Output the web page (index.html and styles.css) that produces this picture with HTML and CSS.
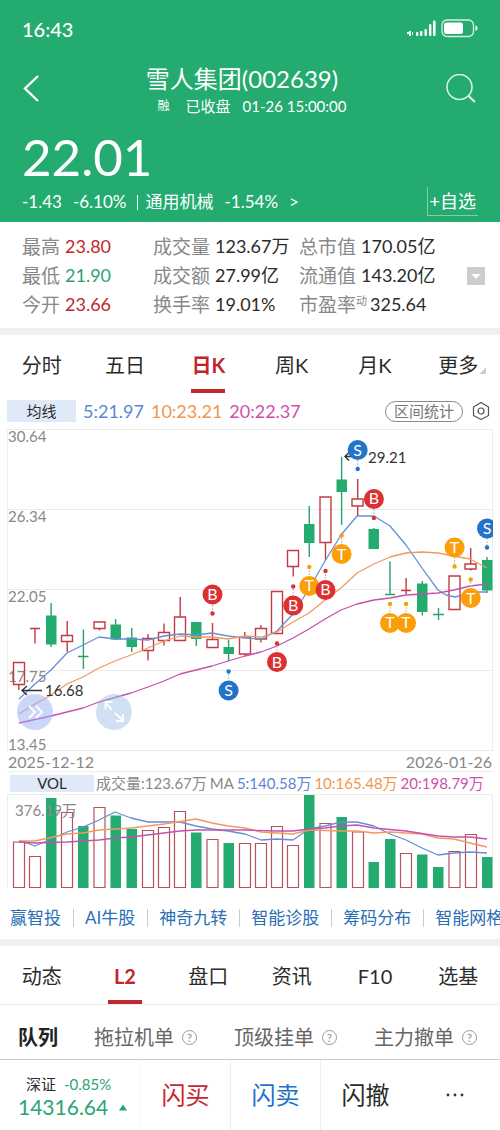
FILE: index.html
```html
<!DOCTYPE html>
<html lang="zh-CN">
<head>
<meta charset="utf-8">
<meta name="viewport" content="width=device-width, initial-scale=1">
<title>雪人集团(002639)</title>
<link rel="stylesheet" href="styles.css">
</head>
<body>
<header class="hero">
  <div class="status">
    <span class="status-time">16:43</span>
    <svg class="status-icons" viewBox="0 0 72 20" width="72" height="20" aria-hidden="true">
      <g fill="#fff">
        <rect x="1" y="13" width="2" height="2"/><rect x="3" y="12" width="2" height="5"/><rect x="6" y="13" width="1" height="3"/>
        <rect x="10" y="13" width="2.4" height="4" rx="1"/><rect x="14" y="12" width="2.4" height="5" rx="1"/>
        <rect x="18.500" y="10" width="2.400" height="7" rx="1"/><rect x="23" y="5" width="2.400" height="12" rx="1"/>
        <rect x="27" y="1.500" width="2.600" height="15.500" rx="1"/>
        <rect x="38" y="3.500" width="19" height="11.500" rx="2.500"/>
        <path d="M69.500 6.500q2 0 2 2.700t-2 2.700z"/>
      </g>
      <rect x="36" y="1" width="31.500" height="16.500" rx="5" fill="none" stroke="#d6f2e3" stroke-width="1.300"/>
    </svg>
  </div>
  <div class="titlebar">
    <button class="icon-btn" aria-label="返回"><svg viewBox="0 0 20 30" width="20" height="30"><path d="M16 2 3 14.500 16 27" fill="none" stroke="#fff" stroke-width="2.400"/></svg></button>
    <div class="title-block">
      <h1 class="title">雪人集团(002639)</h1>
      <p class="subtitle"><span class="rong">融</span><span>已收盘</span><span>01-26 15:00:00</span></p>
    </div>
    <button class="icon-btn icon-right" aria-label="搜索"><svg viewBox="0 0 30 30" width="30" height="30"><g fill="none" stroke="#dff7ea" stroke-width="1.500"><circle cx="13.500" cy="13" r="12.500"/><path d="m22.500 22 6.500 6" stroke-width="2"/></g></svg></button>
  </div>
  <p class="price">22.01</p>
  <div class="change-row">
    <a class="change" href="#sector"><span>-1.43</span><span>-6.10%</span><span class="sector">通用机械</span><span>-1.54%</span><span>&gt;</span></a>
    <button class="add-btn">+自选</button>
  </div>
</header>

<section class="stats">
  <dl class="stat-col">
    <div class="stat"><dt>最高</dt><dd class="up">23.80</dd></div>
    <div class="stat"><dt>最低</dt><dd class="down">21.90</dd></div>
    <div class="stat"><dt>今开</dt><dd class="up">23.66</dd></div>
  </dl>
  <dl class="stat-col">
    <div class="stat"><dt>成交量</dt><dd>123.67万</dd></div>
    <div class="stat"><dt>成交额</dt><dd>27.99亿</dd></div>
    <div class="stat"><dt>换手率</dt><dd>19.01%</dd></div>
  </dl>
  <dl class="stat-col">
    <div class="stat"><dt>总市值</dt><dd>170.05亿</dd></div>
    <div class="stat"><dt>流通值</dt><dd>143.20亿</dd></div>
    <div class="stat stat-tight"><dt>市盈率<sup class="dyn">动</sup></dt><dd>325.64</dd></div>
  </dl>
  <button class="expand" aria-label="展开"><svg viewBox="0 0 18 18" width="18" height="18"><path d="M4.500 7h9L9 12z" fill="#fff"/></svg></button>
</section>

<nav class="tabs band">
  <button class="tab">分时</button>
  <button class="tab">五日</button>
  <button class="tab tab-on">日K</button>
  <button class="tab">周K</button>
  <button class="tab">月K</button>
  <button class="tab tab-more">更多</button>
</nav>

<section class="tools">
  <button class="chip">均线</button>
  <span class="c5">5:21.97</span><span class="c10">10:23.21</span><span class="c20">20:22.37</span>
  <button class="range-btn">区间统计</button>
  <button class="icon-btn" aria-label="设置"><svg viewBox="0 0 18 20" width="18" height="20"><g fill="none" stroke="#555" stroke-width="1.200"><path d="M9 1.500 16.500 6v8.500L9 18.500 1.500 14.500V6z" stroke-linejoin="round"/><circle cx="9" cy="10" r="3"/></g></svg></button>
</section>

<section class="kchart">
  <svg class="plot" viewBox="0 428 500 324" role="img" aria-label="日K线">
    <path class="grid" d="M7.500 429.500H492.500V750.500H7.500zM7.500 509.500H492.500M7.500 589.500H492.500M7.500 670.500H492.500"/>
    <g class="axis"><text x="8" y="442">30.64</text><text x="8" y="522">26.34</text><text x="8" y="602">22.05</text><text x="8" y="682">17.75</text><text x="8" y="750">13.45</text></g>
    <path class="red" d="M18.800 684.500V690M35 628.500V643.500M30 628.500H40M67.200 621V635M67.200 641.500V652M99.500 628.500V630.500M148 634V638.500M148 650.500V660.500M164 623.500V632.500M164 640.500V645.500M180.200 597V617M212.500 623V639M244.800 632V637M244.800 654V655.500M260.900 625V628.500M260.900 639V642.500M293.200 566.500V576.500M325.500 542.500V560M357.700 479V499M357.700 506V516M406.100 578V594M401 590.500H411M470.700 548V564M470.700 569V570.500"/>
    <path class="red" d="M13.500 662.500h11v22h-11zM61.500 635.500h11v6h-11zM94 622h11v6.500h-11zM142.500 638.500h11v12h-11zM158.500 632.500h11v8h-11zM174.500 617h11v23.500h-11zM207 639.500h11v8h-11zM239.500 637h11v17h-11zM255.500 628.500h11v10.500h-11zM271.500 591.500h11v42h-11zM287.500 550.500h11v16h-11zM320 497h11v45.500h-11zM352 499h11v7h-11zM449 576h11v33.500h-11zM465 564h11v5h-11z"/>
    <path class="green" d="M51.100 603V647M83.400 629.500V669M78 656.500H88.500M115.600 619V640M131.800 628V652M196.300 622V646M228.600 640V661M309.300 506V557M341.600 457V525M373.900 528V549M390 561.500V594M385 594.500H395M422.300 581V615.500M438.500 608V620M433 614.500H444M487 557V593"/>
    <path class="green-fill" d="M46 615.500h10.500v29H46zM110.500 624.500H121V639.500h-10.500zM126.500 637.500H137v9.500h-10.500zM191 622h10.500v17H191zM223.500 647H234v7h-10.500zM304 524h10.500v19H304zM336.500 479.500H347v12.500h-10.500zM368.500 529H379v20h-10.500zM417 583.500h10.500V612H417zM482 560h10.500v30.500H482z"/>
    <polyline class="ma ma5" points="19,699 35,684 51,670 67,653 83,645 99,637 115,639 131,639 148,640 164,636 180,634 196,635 212,633 228,636 245,638 261,639 277,631 293,614 309,589 325,561 341,535 357,516 374,516 390,526 406,545 422,568 438,590 446,595 455,597 463,595 471,592 487,592"/>
    <polyline class="ma ma10" points="19,714 35,704 51,695 67,684 83,677 99,668 115,661 131,655 148,648 164,641 180,636 196,637 212,637 228,639 245,636 261,637 277,632 293,622 309,613 325,600 341,588 357,573 374,564 390,557 406,553 422,552 438,553 454,556 470,559 487,568"/>
    <polyline class="ma ma20" points="19,723 51,716 83,708 99,702 131,693 148,687 164,681 180,674 212,666 228,661 245,656 261,652 277,646 293,638 309,629 325,619 341,610 357,604 374,600 390,598 406,595 422,594 438,593 454,590 470,586 487,584"/>
    <g class="note"><path d="M42 690.500H22M27 686 22 690.500 27 695M354 456.500H345M349 452.500 345 456.500 349 460.500"/><text x="45" y="696">16.68</text><text x="368" y="463">29.21</text></g>
    <path class="stem" d="M212.500 605V613M228.600 671V680M277 643V652M293.200 586V596M309.300 567V576M325.500 571V580M341.600 535V544M357.700 460V469M373.900 509V518M390 604V613M406.100 604V613M454.600 557V566M470.700 579V588M487 538V547"/>
    <g class="mark mark-s"><circle cx="228.600" cy="671.500" r="2.200"/><circle cx="228.600" cy="690.500" r="10"/><text x="228.600" y="696">S</text><circle cx="357.700" cy="469" r="2.200"/><circle cx="357.700" cy="450" r="10"/><text x="357.700" y="456">S</text></g>
    <g class="mark mark-t"><circle cx="309.300" cy="567" r="2.200"/><circle cx="309.300" cy="586" r="10"/><text x="309.300" y="591">T</text><circle cx="341.600" cy="535.500" r="2.200"/><circle cx="341.600" cy="554" r="10"/><text x="341.600" y="560">T</text><circle cx="390" cy="604" r="2.200"/><circle cx="390" cy="623" r="10"/><text x="390" y="628">T</text><circle cx="406.100" cy="604" r="2.200"/><circle cx="406.100" cy="623" r="10"/><text x="406.100" y="628">T</text><circle cx="454.600" cy="566.500" r="2.200"/><circle cx="454.600" cy="547.500" r="10"/><text x="454.600" y="553">T</text><circle cx="470.700" cy="579.500" r="2.200"/><circle cx="470.700" cy="598" r="10"/><text x="470.700" y="604">T</text></g>
    <g class="mark mark-b"><circle cx="212.500" cy="613.500" r="2.200"/><circle cx="212.500" cy="594.500" r="10"/><text x="212.500" y="600">B</text><circle cx="277" cy="643.500" r="2.200"/><circle cx="277" cy="662" r="10"/><text x="277" y="668">B</text><circle cx="293.200" cy="586.500" r="2.200"/><circle cx="293.200" cy="605.500" r="10"/><text x="293.200" y="611">B</text><circle cx="325.500" cy="571" r="2.200"/><circle cx="325.500" cy="590" r="10"/><text x="325.500" y="595">B</text><circle cx="373.900" cy="518" r="2.200"/><circle cx="373.900" cy="499" r="10"/><text x="373.900" y="504">B</text></g>
    <svg x="470" y="510" width="23" height="45" viewBox="470 510 23 45"><g class="mark mark-s"><circle cx="487" cy="547.500" r="2.200"/><circle cx="487" cy="528.500" r="10"/><text x="487" y="534">S</text></g></svg>
  </svg>
  <button class="float float-fast" aria-label="快进"><svg viewBox="0 0 36 36" width="36" height="36"><path d="m12 12 6 6-6 6M19 12l6 6-6 6" fill="none" stroke="#fff" stroke-width="1.800"/></svg></button>
  <button class="float float-full" aria-label="全屏"><svg viewBox="0 0 36 36" width="36" height="36"><path d="M16 16 10 9M9.500 15V8h7M19 19l8 7.500M20 27h7v-7" fill="none" stroke="#fff" stroke-width="1.800"/></svg></button>
  <div class="dates"><time>2025-12-12</time><time>2026-01-26</time></div>
</section>

<section class="vol">
  <div class="vol-head"><button class="chip vol-chip">VOL</button><span class="vol-text"><span>成交量:123.67万</span><span>MA</span><span class="c5">5:140.58万</span><span class="c10">10:165.48万</span><span class="c20">20:198.79万</span></span></div>
  <svg class="plot" viewBox="0 794 500 96" role="img" aria-label="成交量">
    <path class="grid" d="M7.500 888V794.500H492.500V888"/>
    <path class="bar-red" d="M13.500 887.500V842H24.500V887.500zM29.500 887.500V856.500H40.500V887.500zM61.500 887.500V812.500H72.500V887.500zM94 887.500V807.500H105V887.500zM142.500 887.500V830.500H153.500V887.500zM158.500 887.500V827.500H169.500V887.500zM174.500 887.500V811.500H185.500V887.500zM207 887.500V839.500H218V887.500zM239.500 887.500V843.500H250.500V887.500zM255.500 887.500V843.500H266.500V887.500zM271.500 887.500V826.500H282.500V887.500zM287.500 887.500V845.500H298.500V887.500zM320 887.500V823.500H331V887.500zM352.500 887.500V832H363.500V887.500zM400.500 887.500V853.500H411.500V887.500zM449 887.500V851.500H460V887.500zM465.500 887.500V834.500H476.500V887.500z"/>
    <path class="green-fill" d="M46 888V798H56.500V888zM78 888V826H88.500V888zM110.500 888V815.500H121V888zM126.500 888V829H137V888zM191 888V832.500H201.500V888zM223.500 888V843H234V888zM304 888V795H314.500V888zM336.500 888V817H347V888zM368.500 888V862H379V888zM385 888V839H395.500V888zM417 888V854.500H427.500V888zM433 888V867H443.500V888zM482 888V857H492.500V888z"/>
    <polyline class="ma ma5" points="19,841 27,843 35,846 51,839 67,832 83,827 99,820 115,812 131,818 148,822 180,822 196,826 212,829 228,831 245,834 261,840 277,839 293,840 309,829 325,826 341,822 357,822 374,826 390,834 406,840 422,848 438,855 454,853 470,852 487,853"/>
    <polyline class="ma ma10" points="19,841 35,841 67,834 83,833 99,830 131,828 164,824 196,819 212,823 228,826 245,828 261,832 277,833 293,834 309,830 341,831 357,831 374,833 390,832 406,833 422,834 438,838 454,839 470,843 487,847"/>
    <polyline class="ma ma20" points="19,842 35,843 67,842 99,840 115,838 131,837 164,833 180,831 196,830 245,830 277,831 293,831 309,829 325,828 341,826 357,825 374,828 406,831 438,836 454,837 470,837 487,839"/>
    <text class="axis" x="15" y="816">376.19万</text>
  </svg>
</section>

<nav class="links">
  <a href="#a">赢智投</a><a href="#b">AI牛股</a><a href="#c">神奇九转</a><a href="#d">智能诊股</a><a href="#e">筹码分布</a><a href="#f">智能网格</a>
</nav>

<nav class="tabs band tabs-line">
  <button class="tab">动态</button>
  <button class="tab tab-on">L2</button>
  <button class="tab">盘口</button>
  <button class="tab">资讯</button>
  <button class="tab">F10</button>
  <button class="tab">选基</button>
</nav>

<nav class="queue">
  <button class="q q-on">队列</button>
  <button class="q">拖拉机单<span class="help">?</span></button>
  <button class="q">顶级挂单<span class="help">?</span></button>
  <button class="q">主力撤单<span class="help">?</span></button>
</nav>

<footer class="trade">
  <a class="index" href="#index">
    <span class="index-top"><span>深证</span><span class="down">-0.85%</span></span>
    <span class="index-val down">14316.64<svg viewBox="0 0 10 7" width="10" height="7"><path d="M5 0.500 9 6.500H1z" fill="#1fa866"/></svg></span>
  </a>
  <button class="act buy">闪买</button>
  <button class="act sell">闪卖</button>
  <button class="act cancel">闪撤</button>
  <button class="act more" aria-label="更多操作"><svg viewBox="0 0 18 4" width="18" height="4"><g fill="#333"><circle cx="2" cy="2" r="1.400"/><circle cx="9" cy="2" r="1.400"/><circle cx="16" cy="2" r="1.400"/></g></svg></button>
</footer>
</body>
</html>
```
FILE: styles.css
```css
* { box-sizing: border-box; }
body, h1, p, dl, dd { margin: 0; }
body {
  background: #fff;
  color: #2b2b2b;
  font-family: Lato, "Noto Sans CJK SC", sans-serif;
  font-size: 18px;
  line-height: 24px;
  overflow-x: hidden;
}
button {
  padding: 0;
  border: 0;
  background: none;
  color: inherit;
  font: inherit;
  white-space: nowrap;
}
a { color: inherit; text-decoration: none; }
svg { display: block; }

.up { color: #c0272d; }
.down { color: #2ba471; }
.c5 { color: #5b86d6; }
.c10 { color: #f0964f; }
.c20 { color: #cf4fae; }

/* Header */
.hero {
  background: #24ab6f;
  color: #fff;
  padding: 14px 22px 6px;
}
.status {
  display: flex;
  justify-content: space-between;
  align-items: center;
  height: 30px;
}
.status-time { font-size: 20px; font-weight: 500; }
.titlebar {
  display: grid;
  grid-template-columns: 48px 1fr 48px;
  align-items: start;
  margin-top: 20px;
}
.icon-btn { display: flex; align-items: center; }
.titlebar .icon-btn { padding-top: 10px; }
.icon-right { justify-content: flex-end; padding-right: 2px; }
.title-block { text-align: center; }
.title {
  font-size: 24px;
  font-weight: 400;
  line-height: 30px;
  padding-right: 16px;
}
.subtitle {
  display: flex;
  justify-content: center;
  gap: 12px;
  padding-left: 4px;
  font-size: 15px;
  line-height: 24px;
}
.rong { font-size: 12px; padding-right: 4px; }
.price { font-size: 51px; line-height: 60px; margin-top: 9px; }
.change-row {
  display: flex;
  justify-content: space-between;
  align-items: center;
}
.change { display: flex; gap: 11px; font-size: 17px; }
.sector {
  position: relative;
  padding-left: 8px;
}
.sector::before {
  content: "";
  position: absolute;
  left: 0;
  top: 5px;
  height: 15px;
  border-left: 1px solid #fff;
}
.add-btn {
  padding: 0 2px;
  border: solid #7dd0a8;
  border-width: 0 0 1px 1px;
  font-size: 18px;
  line-height: 28px;
}

/* Key figures */
.stats {
  display: grid;
  grid-template-columns: 131fr 146fr 168fr 18px;
  align-items: center;
  padding: 10px 15px 9px 22px;
}
.stat {
  display: flex;
  gap: 5px;
  line-height: 29px;
  white-space: nowrap;
}
.stat dt { color: #888; font-size: 19px; }
.stat dd { font-size: 18px; }
.stat-tight { gap: 3px; }
.dyn { font-size: 11px; line-height: 1; }
.expand { background: #ccc; }

/* Tab strips */
.tabs { display: grid; grid-template-columns: repeat(6, 1fr); }
.band { border-top: 7px solid #f0f0f0; }
.tab {
  position: relative;
  height: 58px;
  font-size: 20px;
  line-height: 60px;
}
.tab-on { color: #c0272d; font-weight: 700; }
.tab-on::after {
  content: "";
  position: absolute;
  left: 50%;
  bottom: 0;
  width: 34px;
  height: 4px;
  margin-left: -17px;
  background: #bf2930;
}
.tab-more::after {
  content: "";
  position: absolute;
  right: 14px;
  bottom: 19px;
  width: 7px;
  height: 7px;
  background: linear-gradient(135deg, transparent 50%, #ccc 50%);
}
.tabs-line { border-bottom: 1px solid #eee; }

/* Moving averages */
.tools {
  display: flex;
  align-items: center;
  gap: 7px;
  height: 22px;
  margin: 7px 10px 6px 7px;
}
.tools .icon-btn { margin-left: 2px; }
.chip {
  width: 69px;
  height: 22px;
  background: #dfe9f8;
  font-size: 15px;
  line-height: 22px;
}
.range-btn {
  margin-left: auto;
  padding: 0 8px;
  border: 1px solid #888;
  border-radius: 11px;
  color: #777;
  font-size: 15px;
  line-height: 19px;
}

/* Charts */
.kchart { position: relative; }
.plot { width: 100%; height: auto; }
.grid { fill: none; stroke: #ececec; }
.axis { fill: #888; font-size: 15px; }
.red { fill: none; stroke: #c43a44; stroke-width: 1.4; }
.bar-red { fill: #fff; stroke: #b5525a; stroke-width: 1.2; }
.green { fill: none; stroke: #24a469; stroke-width: 1.4; }
.green-fill { fill: #24ab6f; }
.ma { fill: none; stroke-width: 1.3; stroke-linejoin: round; }
.ma5 { stroke: #6690d4; }
.ma10 { stroke: #ef9a62; }
.ma20 { stroke: #c850ac; }
.note path { fill: none; stroke: #333; stroke-width: 1.4; }
.note text { fill: #333; font-size: 15px; }
.stem { stroke: #bbb; stroke-dasharray: 2 1; }
.mark text { fill: #fff; font-size: 16px; text-anchor: middle; }
.mark-s { fill: #2373cb; }
.mark-t { fill: #fb9e07; }
.mark-b { fill: #dc3032; }
.float {
  position: absolute;
  top: 266px;
  border-radius: 50%;
}
.float-fast { left: 3.3%; background: rgba(150, 175, 245, 0.5); }
.float-full { left: 19.1%; background: rgba(160, 195, 232, 0.5); }
.dates {
  display: flex;
  justify-content: space-between;
  padding: 0 8px;
  color: #888;
  font-size: 16px;
  line-height: 19px;
}
.vol-head {
  display: flex;
  align-items: center;
  gap: 2px;
  height: 23px;
  margin: 0 7px;
  padding-left: 3px;
  border-top: 1px solid #eee;
  white-space: nowrap;
}
.vol-chip { flex: none; width: 84px; height: 17px; line-height: 17px; }
.vol-text { display: flex; gap: 3px; color: #888; font-size: 15px; }

/* Shortcuts */
.links {
  display: flex;
  height: 49px;
  padding: 6px 0 0 10px;
  align-items: center;
  overflow: hidden;
  color: #2b6fb5;
  font-size: 17px;
  line-height: 18px;
  white-space: nowrap;
}
.links a + a {
  margin-left: 12px;
  padding-left: 11px;
  border-left: 1px solid #ccc;
}

/* Order queue */
.queue {
  display: grid;
  grid-template-columns: 76fr 140fr 140fr 126fr;
  height: 55px;
  padding: 10px 0 0 18px;
  border-bottom: 1px solid #ccc;
}
.q {
  display: flex;
  align-items: center;
  gap: 8px;
  color: #666;
  font-size: 20px;
}
.q-on { color: #222; font-weight: 700; }
.help {
  width: 15px;
  height: 15px;
  border: 1px solid #999;
  border-radius: 50%;
  color: #888;
  font-size: 11px;
  line-height: 13px;
}

/* Trading bar */
.trade {
  display: grid;
  grid-template-columns: 140fr 90fr 90fr 90fr 90fr;
  height: 70px;
}
.index { padding: 12px 0 0 18px; }
.index-top {
  display: flex;
  gap: 8px;
  padding-left: 8px;
  font-size: 15px;
}
.index-val {
  display: flex;
  align-items: center;
  gap: 10px;
  font-size: 21px;
  line-height: 22px;
}
.act {
  display: flex;
  align-items: center;
  justify-content: center;
  border-left: 1px solid #eee;
  font-size: 24px;
}
.buy { color: #c8252c; border-left-color: #f8f8f8; }
.sell { color: #2371c7; }
.more { border-left: 0; }
```
